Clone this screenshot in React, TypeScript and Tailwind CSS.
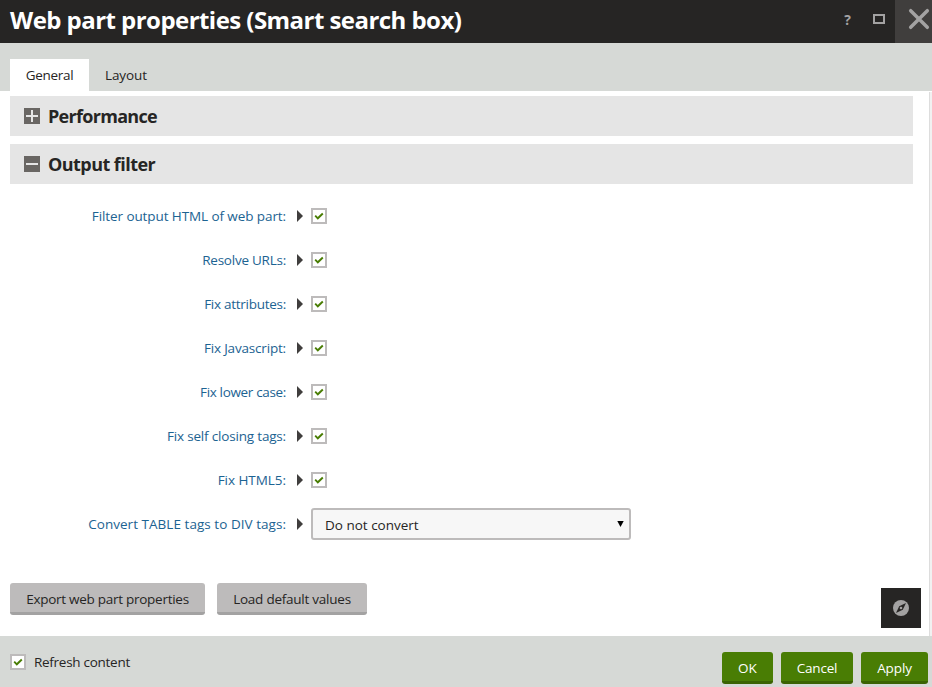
import type { ReactNode } from "react";

function Check({ className = "" }: { className?: string }) {
  return (
    <span className={`flex h-4 w-4 shrink-0 items-center justify-center border-2 border-[#bdbbbb] bg-white ${className}`}>
      <svg width="12" height="12" viewBox="0 0 12 12" fill="none" stroke="#497d04" strokeWidth="1.9">
        <path d="M2.2 5.7 4.8 8.3 9.8 3.5" />
      </svg>
    </span>
  );
}

function Section({ title, open, className }: { title: string; open: boolean; className: string }) {
  return (
    <div className={`flex h-10 w-[903px] items-center bg-[#e5e5e5] pl-3.5 ${className}`}>
      <svg className="mr-2 shrink-0" width="16" height="16" viewBox="0 0 16 16">
        <rect width="16" height="16" fill="#696663" />
        <path d={open ? "M2 8H14" : "M2 8H14M8 2V14"} stroke="#e5e5e5" strokeWidth="2" />
      </svg>
      <h2 className="text-[18px] leading-6 font-bold whitespace-nowrap text-[#262524]">{title}</h2>
    </div>
  );
}

function Row({ label, spacing, children }: { label: string; spacing: string; children: ReactNode }) {
  return (
    <div className="flex h-11 items-center">
      <div className="flex w-[286px] shrink-0 justify-end">
        <span className={`whitespace-nowrap text-[#1c6392] ${spacing}`}>{label}</span>
      </div>
      <svg className="ml-[11px] mr-2 shrink-0" width="6" height="12" viewBox="0 0 6 12">
        <path d="M0 0 6 6 0 12Z" fill="#403e3d" />
      </svg>
      {children}
    </div>
  );
}

const rows = [
  { label: "Filter output HTML of web part:", spacing: "tracking-[-0.09px]" },
  { label: "Resolve URLs:", spacing: "tracking-[-0.24px]" },
  { label: "Fix attributes:", spacing: "tracking-[-0.27px]" },
  { label: "Fix Javascript:", spacing: "tracking-[-0.18px]" },
  { label: "Fix lower case:", spacing: "tracking-[-0.34px]" },
  { label: "Fix self closing tags:", spacing: "tracking-[-0.18px]" },
  { label: "Fix HTML5:", spacing: "tracking-[-0.05px]" },
];

function GrayButton({ label, className }: { label: string; className: string }) {
  return (
    <button className={`flex h-8 items-center justify-center rounded-[3px] border-b-3 border-[#a3a2a2] bg-[#bdbbbb] pt-[3px] whitespace-nowrap ${className}`}>
      {label}
    </button>
  );
}

function GreenButton({ label, className }: { label: string; className: string }) {
  return (
    <button className={`flex h-8 items-center justify-center rounded-[3px] border-b-3 border-[#3a6303] bg-[#497d04] pt-[3px] whitespace-nowrap text-white ${className}`}>
      {label}
    </button>
  );
}

export default function App() {
  return (
    <div className="relative flex h-[687px] w-[932px] flex-col overflow-hidden bg-white font-['Open_Sans','Noto_Sans',sans-serif] text-[13.5px] leading-5 text-[#262524]">
      <header className="flex h-[43px] shrink-0 items-center bg-[#262524]">
        <h1 className="mb-[3px] ml-2.5 grow text-[24px] leading-8 font-bold tracking-[-0.55px] whitespace-nowrap text-white">
          Web part properties (Smart search box)
        </h1>
        <span className="mr-[22px] mb-1 text-[14px] font-bold text-[#a3a2a2]">?</span>
        <span className="mr-2.5 mb-[5px] h-2.5 w-3 border-2 border-[#a3a2a2]" />
        <span className="flex h-full w-[37px] bg-[#403e3d]">
          <svg width="37" height="43" viewBox="0 0 37 43" stroke="#a3a2a2" strokeWidth="3.5" strokeLinecap="round">
            <path d="M15.7 10.7 32.3 27.3M32.3 10.7 15.7 27.3" />
          </svg>
        </span>
      </header>

      <nav className="flex h-12 shrink-0 items-end bg-[#d6d9d6] pl-2.5">
        <span className="flex h-8 w-[79px] items-center justify-center bg-white tracking-[-0.3px]">General</span>
        <span className="flex h-8 items-center pl-4 tracking-[-0.1px]">Layout</span>
      </nav>

      <div className="flex grow">
        <main className="flex grow flex-col pl-2.5 pt-[5px]">
          <Section title="Performance" open={false} className="tracking-[-0.7px]" />
          <Section title="Output filter" open className="mt-2 tracking-[-0.55px]" />
          <div className="-ml-2.5 pt-2.5">
            {rows.map((r) => (
              <Row key={r.label} label={r.label} spacing={r.spacing}>
                <Check />
              </Row>
            ))}
            <Row label="Convert TABLE tags to DIV tags:" spacing="tracking-[0.04px]">
              <div className="flex h-8 w-80 items-center justify-between rounded-[3px] border-2 border-[#bdbbbb] bg-[#f7f7f7] pl-3 pr-[5px]">
                <span className="pt-px">Do not convert</span>
                <svg className="mb-px" width="7" height="6" viewBox="0 0 7 6">
                  <path d="M0.3 0H6.7L3.5 6Z" fill="#000" />
                </svg>
              </div>
            </Row>
          </div>
          <div className="mt-[37px] flex gap-3">
            <GrayButton label="Export web part properties" className="w-[195px] tracking-[-0.27px]" />
            <GrayButton label="Load default values" className="w-[150px] tracking-[-0.24px]" />
          </div>
        </main>
        <div className="mt-px w-[3px] shrink-0 border-l border-[#dddddd] bg-[#f1f1f1]" />
      </div>

      <footer className="flex h-[51px] shrink-0 items-start bg-[#d6d9d6] pl-2.5 pt-4">
        <Check className="mt-0.5" />
        <span className="ml-2 grow tracking-[-0.28px]">Refresh content</span>
        <div className="flex gap-2 pr-1">
          <GreenButton label="OK" className="w-[51px]" />
          <GreenButton label="Cancel" className="w-[72px] tracking-[-0.2px]" />
          <GreenButton label="Apply" className="w-[67px] tracking-[-0.1px]" />
        </div>
      </footer>

      <div className="absolute top-[588px] left-[881px] flex h-10 w-10 items-center justify-center bg-[#262524]">
        <svg width="16" height="16" viewBox="0 0 16 16">
          <circle cx="8" cy="8" r="8" fill="#a3a2a2" />
          <path d="M13 3 9.8 9.8 3 13 6.2 6.2Z" fill="#262524" />
          <circle cx="8" cy="8" r="1.3" fill="#a3a2a2" />
        </svg>
      </div>
    </div>
  );
}
